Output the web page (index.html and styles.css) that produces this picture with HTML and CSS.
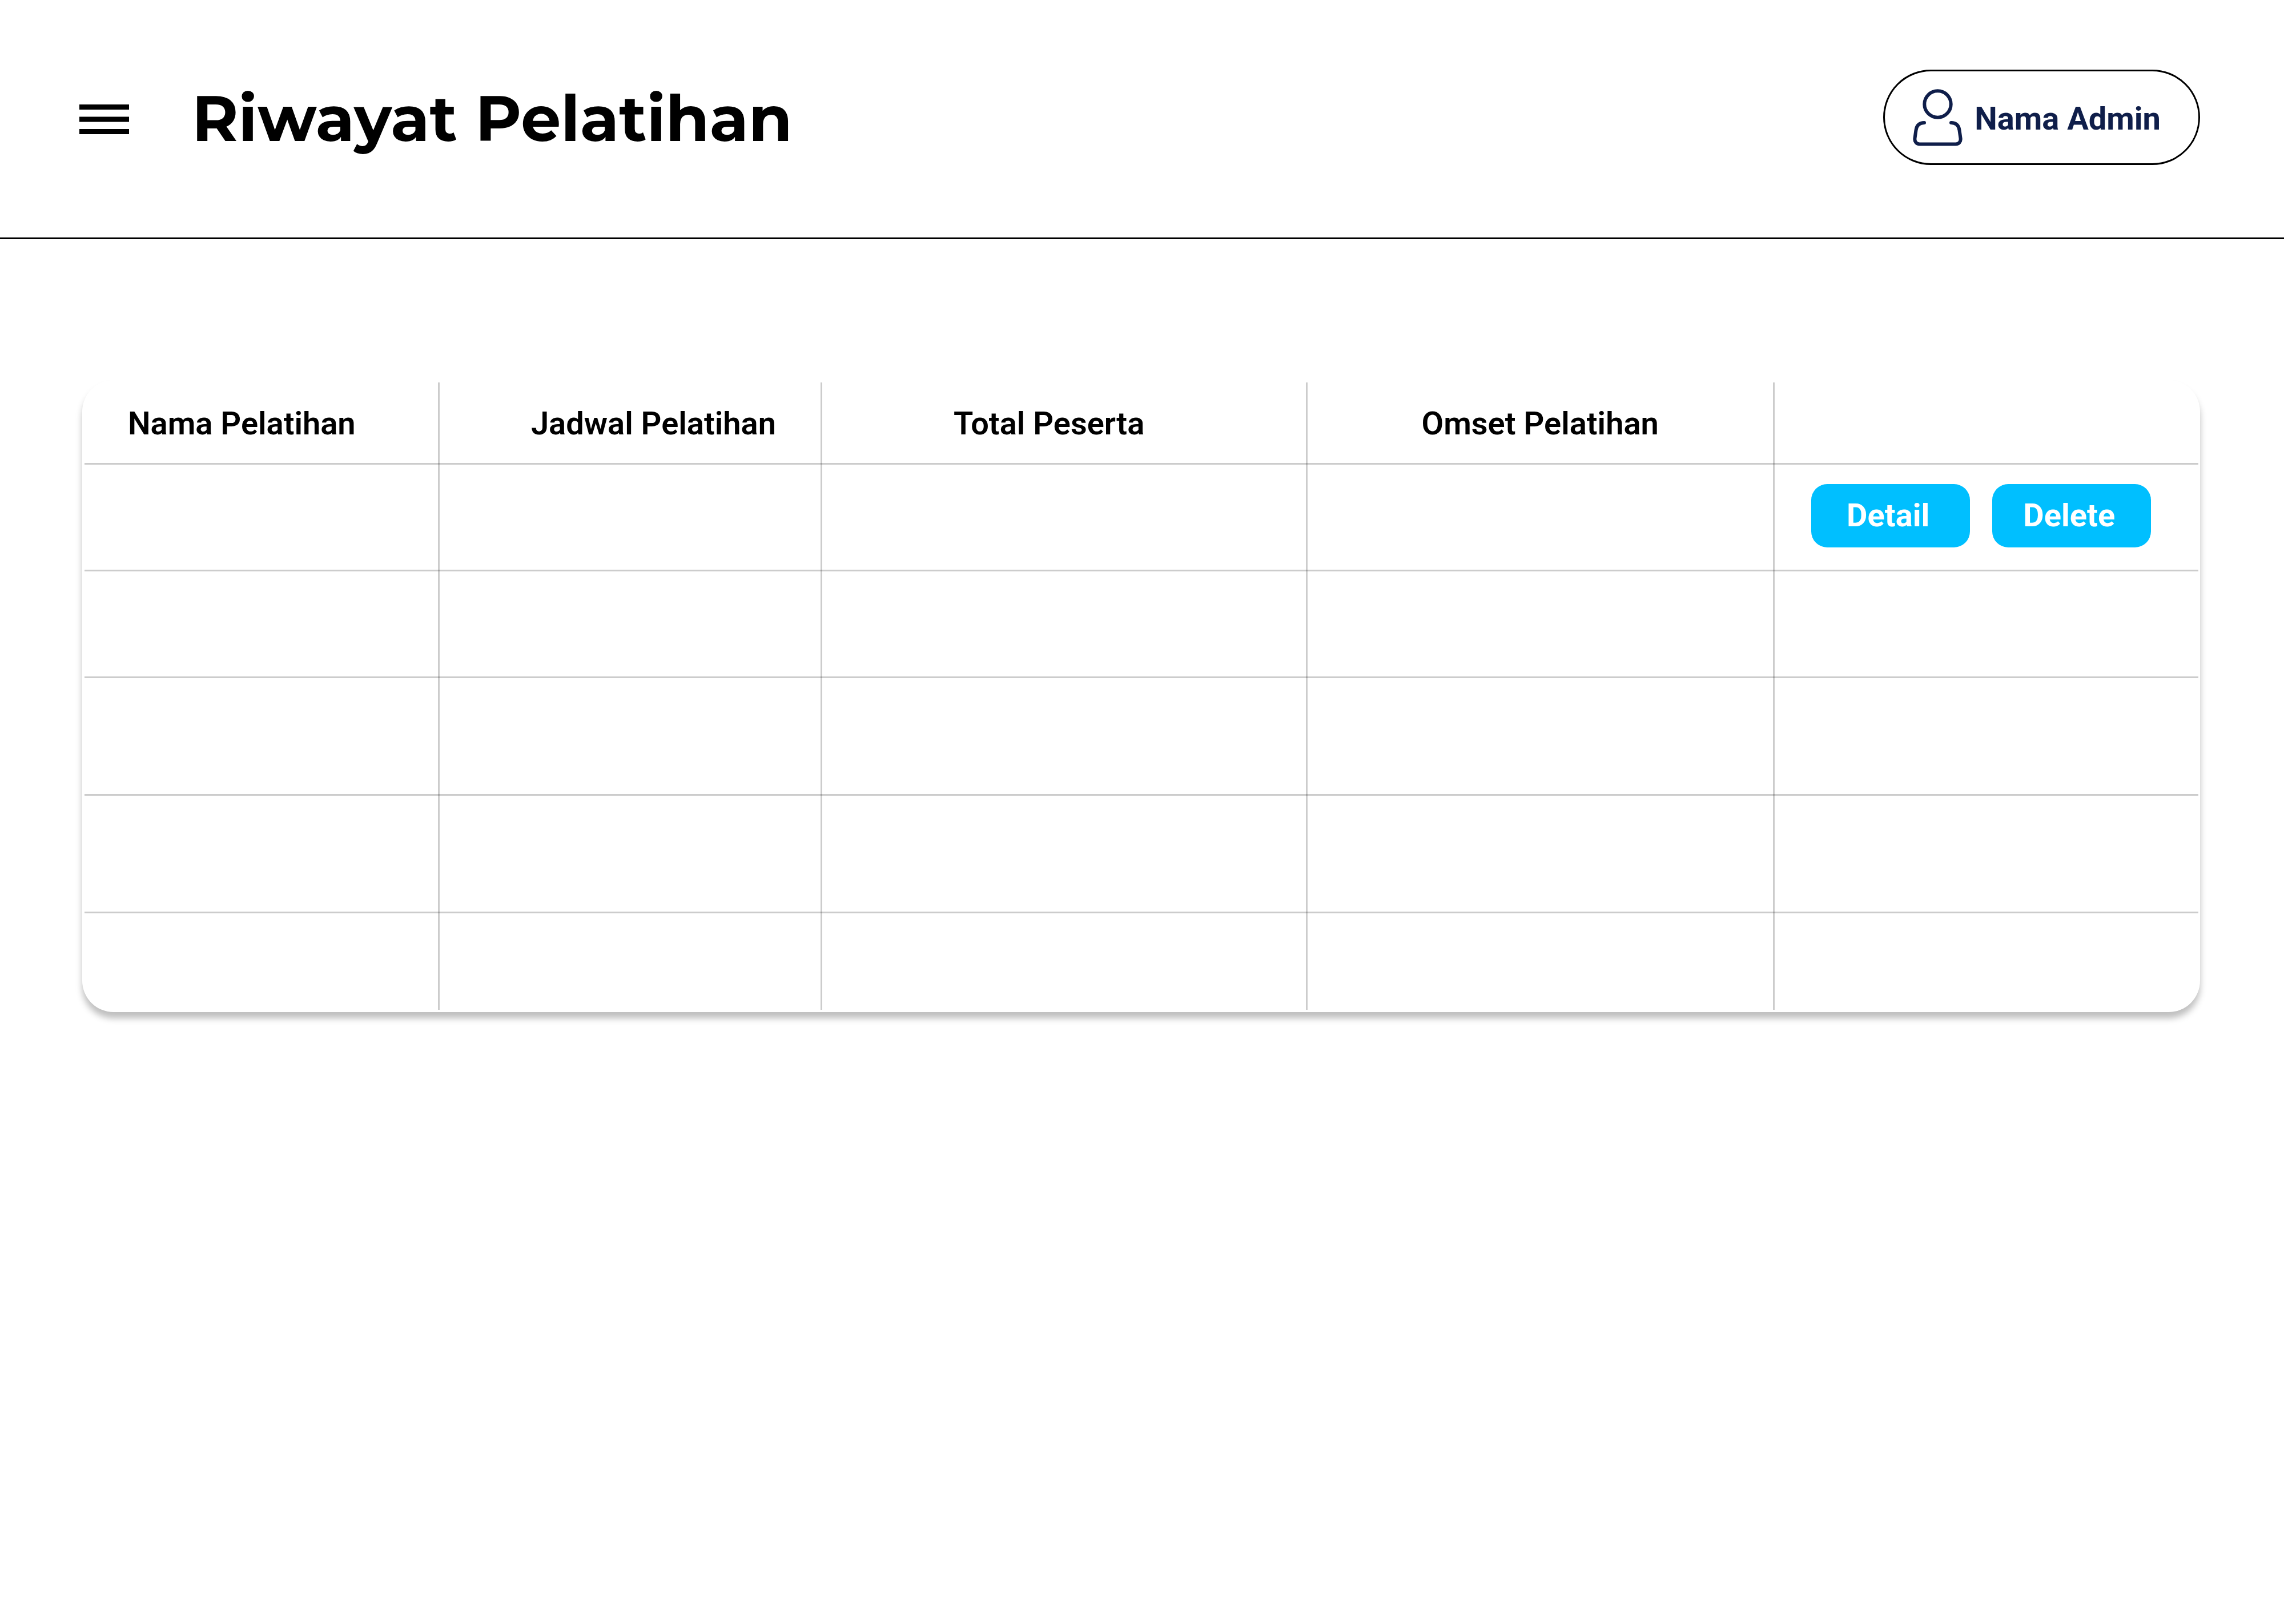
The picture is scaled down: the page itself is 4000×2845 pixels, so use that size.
FILE: index.html
```html
<!DOCTYPE html>
<html lang="id">
<head>
  <meta charset="utf-8">
  <meta name="viewport" content="width=device-width, initial-scale=1">
  <title>Riwayat Pelatihan</title>
  <link rel="stylesheet" href="styles.css">
</head>
<body>
  <header class="topbar">
    <div class="topbar-start">
      <button class="menu-button" type="button" aria-label="Menu">
        <svg class="menu-icon" viewBox="0 0 87 52" aria-hidden="true">
          <path d="M0 0h87v9H0zM0 21.500h87v9H0zM0 43h87v9H0z"/>
        </svg>
      </button>
      <h1 class="page-title">Riwayat Pelatihan</h1>
    </div>
    <button class="account" type="button">
      <svg class="account-icon" viewBox="0 0 88 100" aria-hidden="true">
        <circle cx="43.500" cy="26.500" r="23.200"/>
        <path d="M20 59C10 59 6.500 65 5.500 72L3.500 86C2.500 92.500 7 96.500 12 96.500H75C80 96.500 84.500 92.500 83.500 86L81.500 72C80.500 65 77 59 67 59"/>
      </svg>
      <span class="account-name">Nama Admin</span>
    </button>
  </header>

  <main class="content">
    <div class="card">
      <table class="history">
        <colgroup>
          <col class="col-name">
          <col class="col-schedule">
          <col class="col-total">
          <col class="col-revenue">
          <col class="col-actions">
        </colgroup>
        <thead>
          <tr>
            <th class="head-name" scope="col">Nama Pelatihan</th>
            <th class="head-schedule" scope="col">Jadwal Pelatihan</th>
            <th class="head-total" scope="col">Total Peserta</th>
            <th class="head-revenue" scope="col">Omset Pelatihan</th>
            <td></td>
          </tr>
        </thead>
        <tbody>
          <tr class="row-short">
            <td></td><td></td><td></td><td></td>
            <td>
              <div class="actions">
                <button class="action" type="button">Detail</button>
                <button class="action" type="button">Delete</button>
              </div>
            </td>
          </tr>
          <tr class="row-short"><td></td><td></td><td></td><td></td><td></td></tr>
          <tr class="row-tall"><td></td><td></td><td></td><td></td><td></td></tr>
          <tr class="row-tall"><td></td><td></td><td></td><td></td><td></td></tr>
          <tr class="row-last"><td></td><td></td><td></td><td></td><td></td></tr>
        </tbody>
      </table>
    </div>
  </main>
</body>
</html>
```
FILE: styles.css
```css
:root {
  --navy: #0f1e4a;
  --sky: #00bfff;
  --rule: rgba(0, 0, 0, 0.2);
}

* {
  box-sizing: border-box;
}

body {
  margin: 0;
  background: #fff;
  color: #000;
  font-family: Roboto, "Liberation Sans", sans-serif;
  font-size: 56px;
  line-height: 64px;
}

button {
  font: inherit;
  color: inherit;
  cursor: pointer;
}

/* Top bar */
.topbar {
  display: flex;
  align-items: center;
  justify-content: space-between;
  padding: 122px 147px 127px 139px;
  border-bottom: 3px solid #000;
}

.topbar-start {
  display: flex;
  align-items: center;
  gap: 110px;
  padding-top: 6px;
}

.menu-button {
  display: flex;
  padding: 0;
  border: 0;
  background: none;
}

.menu-icon {
  width: 87px;
  height: 52px;
}

.page-title {
  margin: 0 0 2px;
  font-family: Montserrat, Inter, "Open Sans", sans-serif;
  font-size: 111px;
  font-weight: 700;
  line-height: 134px;
}

.account {
  display: flex;
  align-items: center;
  gap: 20px;
  height: 167px;
  padding: 0 66px 0 49px;
  border: 3px solid #000;
  border-radius: 84px;
  background: none;
  color: var(--navy);
  font-weight: 700;
}

.account-icon {
  width: 88px;
  height: 100px;
  fill: none;
  stroke: currentColor;
  stroke-width: 6;
  stroke-linecap: round;
  stroke-linejoin: round;
}

.account-name {
  padding-top: 4px;
}

/* History table */
.content {
  padding: 247px 147px 80px 144px;
}

.card {
  padding: 4px 3px 4px 4px;
  border-radius: 55px;
  background: #fff;
  box-shadow: 0 11px 12px rgba(0, 0, 0, 0.25);
}

.history {
  width: 100%;
  table-layout: fixed;
  border-spacing: 0;
}

.history col:not(:last-child) {
  background: linear-gradient(var(--rule), var(--rule)) right / 3px 100% no-repeat;
}

.col-name { width: 16.8%; }
.col-schedule { width: 18.1%; }
.col-total { width: 22.95%; }
.col-revenue { width: 22.1%; }
.col-actions { width: 20.05%; }

.history th,
.history td {
  padding: 0;
  border-bottom: 3px solid var(--rule);
  text-align: left;
  vertical-align: middle;
}

.history th {
  height: 144px;
  padding-top: 2px;
  font-weight: 600;
}

.history .head-name { padding-left: 76px; }
.history .head-schedule { padding-left: 160px; }
.history .head-total { padding-left: 230px; }
.history .head-revenue { padding-left: 200px; }

.row-short { height: 187px; }
.row-tall { height: 206px; }
.row-last { height: 169px; }

.history .row-last td {
  border-bottom: 0;
}

.actions {
  display: flex;
  gap: 39px;
  margin-bottom: 6px;
  padding-left: 64px;
}

.action {
  width: 278px;
  height: 111px;
  padding: 0 8px 0 0;
  border: 0;
  border-radius: 28px;
  background: var(--sky);
  color: #fff;
  font-weight: 700;
  text-align: center;
}
```
